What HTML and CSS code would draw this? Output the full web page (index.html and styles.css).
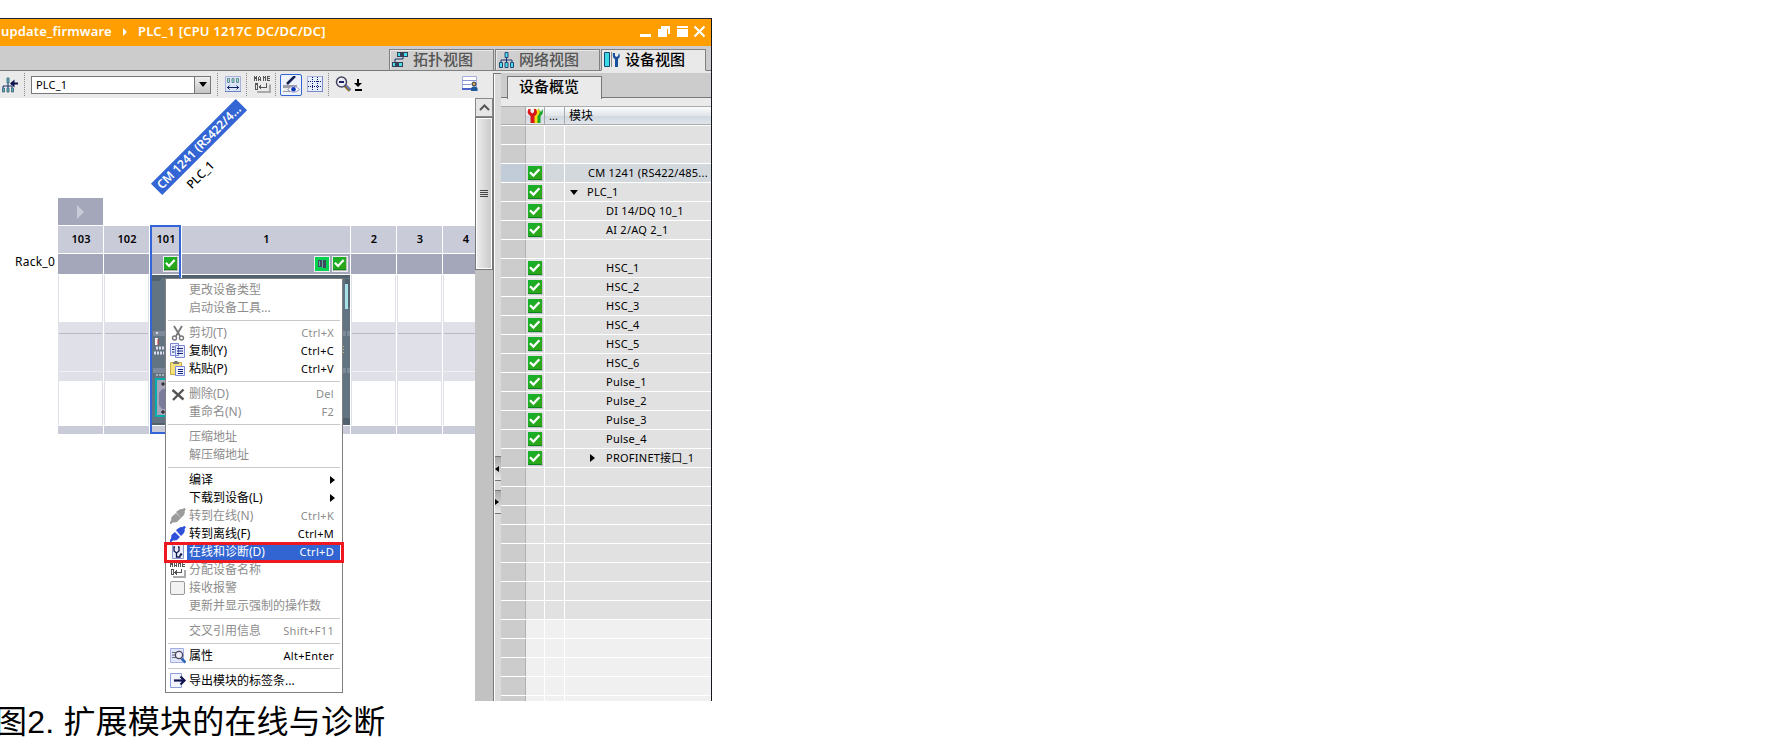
FILE: index.html
```
<!DOCTYPE html>
<html lang="zh-CN">
<head>
<meta charset="utf-8">
<title>PLC_1</title>
<link rel="stylesheet" href="styles.css">
</head>
<body>
<svg width="0" height="0" class="defs">
  <defs>
    <linearGradient id="gr" x1="0" y1="0" x2="1" y2="1"><stop offset="0" stop-color="#12b22e"/><stop offset="1" stop-color="#35a312"/></linearGradient>
    <symbol id="check" viewBox="0 0 15 15"><path d="M1 1h14v14H1z" fill="#c4c4cc"/><path d="M0 0h14v14H0z" fill="url(#gr)"/><path d="M0 13h14v1H0z" fill="#0b8420"/><path d="M2 6.2l3.4 3.4L11.4 3.2" fill="none" stroke="#fff" stroke-width="2.3"/></symbol>
    <symbol id="name" viewBox="0 0 16 16"><path d="M3 15h13M15 8v7" stroke="#aaa" stroke-width="2" fill="none"/><g shape-rendering="crispEdges" fill="#555"><path d="M0 0h1v5H0zM1 1h1v2H1zM2 0h1v5H2zM4 1h1v4H4zM5 0h1v1H5zM5 3h1v1H5zM6 1h1v4H6zM8 0h1v5H8zM9 1h1v1H9zM10 0h1v5h-1zM12 0h1v5h-1zM13 0h2v1h-2zM13 2h2v1h-2zM13 4h2v1h-2z"/><path d="M1 7h3v6H1zM2 8v4h1V8z" fill-rule="evenodd"/><path d="M11 7h1v4H7v2l-3-2.500L7 8v2h4z"/></g></symbol>
    <symbol id="net" viewBox="0 0 16 16"><path d="M8 5v3M2.500 11V8h11v3M8 8v3" stroke="#183068" fill="none"/><path d="M6.500.5h3v5h-3zM1 10.500h3v5H1zM6.500 10.500h3v5h-3zM12 10.500h3v5h-3z" fill="#45e0e8" stroke="#284878"/></symbol>
    <symbol id="plug" viewBox="0 0 16 16"><path d="M0 15.500l3-3M12 4l3-3.500" stroke="currentColor" stroke-width="2.500"/><path d="M1.500 9L6 5l5 5-4 4q-3.500 1-5-.5T1.500 9zM6 4l3.500-2.500q3-1 4.500.5t0 5L11 10z" fill="currentColor"/></symbol>
  </defs>
</svg>
<main class="shot">
<section class="window">
  <header class="title"><span class="crumb1">update_firmware</span><i class="tri"></i><span class="crumb2">PLC_1 [CPU 1217C DC/DC/DC]</span>
    <svg class="winbtns" width="66" height="13" shape-rendering="crispEdges"><g fill="#fff"><path d="M0 9h11v3H0zM21 1h9v8h-2V4h-7zM18 4h9v8h-9zM37 1h11v2H37zM37 4h11v8H37z"/><path d="M54.500 1.500l10 10m0-10l-10 10" stroke="#fff" stroke-width="2.200" shape-rendering="auto"/></g></svg>
  </header>
  <nav class="tabs">
    <div class="tab"><svg width="17" height="16" viewBox="0 0 17 16"><path d="M3 10V7h8V4" fill="none" stroke="#183068"/><path d="M5 0h11v5H5zM0 10h11v5H0z" fill="#344058"/><path d="M6 1h2v3H6zM12 1h3v3h-3zM1 11h2v3H1zM7 11h3v3H7z" fill="#45e0e8"/></svg><span>拓扑视图</span></div>
    <div class="tab"><svg width="17" height="16"><use href="#net"/></svg><span>网络视图</span></div>
    <div class="tab active"><svg width="16" height="16" viewBox="0 0 16 16"><path d="M.5.5h5v14h-5z" fill="#3bd9e4" stroke="#174a70"/><path d="M7 0h1v15H7z" fill="#888"/><path d="M9 1q-1 5 2 6v8h3V7q3-2 1-6l-1 3-1.500 1L11 4V1z" fill="#174f9c"/></svg><span>设备视图</span></div>
  </nav>
  <div class="panes">
    <section class="left">
      <div class="toolbar">
        <svg class="t0" width="17" height="16" viewBox="0 0 17 16"><path d="M6 6v3M1 12V9h9v3M6 9v3" stroke="#183068" fill="none"/><path d="M5 1h2v5H5zM.5 11h2v4h-2zM5 11h2v4H5zM9.500 11h2v4h-2z" fill="#45c0c8" stroke="#507080"/><path d="M16 6.500H9" stroke="#101450" stroke-width="2"/><path d="M12.500 2.500v8l-4.500-4z" fill="#101450"/></svg>
        <i class="dots d0"></i>
        <div class="combo"><span>PLC_1</span><b><i></i></b></div>
        <i class="dots d1"></i>
        <svg width="17" height="17" viewBox="0 0 17 17"><path d="M.5.5h15v15H.5z" fill="#dce6fb" stroke="#a8b2da"/><path d="M0 15.500h16" stroke="#6d7ec4"/><path d="M2.500 2.500h2v4h-2zM7 2.500h2v4H7zM11.500 2.500h2v4h-2z" fill="#7ee" stroke="#788"/><path d="M2 11.500h12M4.500 9.500l-2 2 2 2M11.500 9.500l2 2-2 2" fill="none" stroke="#112060"/></svg>
        <i class="dots d2"></i>
        <svg width="17" height="17"><use href="#name"/></svg>
        <i class="dots d3"></i>
        <span class="pressed"><svg width="18" height="18" viewBox="0 0 18 18"><path d="M1 9h14v4l-3 3H1z" fill="#9a9ca8"/><path d="M13 0L5 8" stroke="#142050" stroke-width="2.500"/><path d="M1 12h5v3H1z" fill="#eee"/><path d="M5.500 13.500q6-6.500 12 0-6 5.500-12 0z" fill="#fff" stroke="#99b"/><circle cx="11.500" cy="13.200" r="2.300" fill="#0737b8"/></svg></span>
        <svg class="grid" width="17" height="17" viewBox="0 0 17 17"><path d="M.5.5h15v15H.5z" fill="#e6edfc" stroke="#a8b4dd"/><path d="M0 15.500h16M15.500 0v16" stroke="#7888c8"/><path d="M1 5.500h14M1 10.500h14M5.500 1v14M10.500 1v14" stroke="#101c70" stroke-dasharray="1 1"/></svg>
        <i class="dots d4"></i>
        <svg class="mag" width="17" height="17" viewBox="0 0 17 17"><path d="M10 9.500l5 5" stroke="#8f6a20" stroke-width="3.500"/><path d="M10.500 9l5 5" stroke="#5878d8" stroke-width="1.500"/><circle cx="6.500" cy="6" r="5" fill="#ededf6" stroke="#444460" stroke-width="1.500"/><path d="M4 6h5" stroke="#182060" stroke-width="2"/></svg>
        <svg class="down" width="9" height="12"><path d="M3 0h2v4h3l-4 4-4-4h3zM1 10h7v2H1z"/></svg>
        <svg class="usr" width="17" height="17" viewBox="0 0 17 17"><path d="M.5.5h14v13H.5z" fill="#fff" stroke="#a4aee0"/><path d="M0 4.500h14M0 8.500h9" stroke="#8a96d4"/><path d="M0 13h10" stroke="#4a62c8" stroke-width="2"/><circle cx="12" cy="8" r="2" fill="#d8a460" stroke="#234"/><path d="M9 15v-3l2-1.500h2.500l2 1.500v3z" fill="#1c5a9c"/></svg>
      </div>
      <div class="work">
        <div class="canvas">
          <div class="rackarrow"><i></i></div>
          <div class="rack">
            <div class="rname">Rack_0</div>
            <div class="slot"><b>103</b><i></i><u></u><s></s></div>
            <div class="slot"><b>102</b><i></i><u></u><s></s></div>
            <div class="slot s101"><b>101</b><i><svg class="cb" width="15" height="15"><use href="#check"/></svg></i>
              <svg class="mod" width="30" height="150" viewBox="0 0 30 150"><path d="M0 0h30v150H0z" fill="#627482"/><path d="M0 0h30v3H12l-2 3H0zM0 148h30v2H0z" fill="#52616e"/><path d="M0 56h2v5H0zM3 56h27v5H3zM0 93h2v5H0zM3 93h27v5H3z" fill="#7c8a9b"/><path d="M6 57h2v2H6z" fill="#ddd"/><path d="M5 63h3v7H5z" fill="#f4f4f4"/><path d="M8 64v6" stroke="#c33"/><path d="M6 73h9M4 78h10" stroke="#dde" stroke-width="3" stroke-dasharray="2 1"/><path d="M6 100h9" stroke="#eee" stroke-dasharray="2 1"/><path d="M6 104h24v37H6z" fill="#aaa6ba" stroke="#00aeae" stroke-width="2"/><path d="M12 114h8v20h-8l-3-4v-12z" fill="#7b7c9b"/><path d="M11 109h4M11 137h4M13 107v4M13 135v4" stroke="#111"/></svg><s></s></div>
            <div class="slot s1"><b>1</b><i><svg class="st" width="16" height="16" shape-rendering="crispEdges"><path d="M0 0h16v16H0z" fill="#eee"/><path d="M1 1h14v14H1z" fill="#00d250"/><path d="M4 4h4v7H4zM8 4h4v8H8z" fill="#3c4c5e"/><path d="M5 5h1v5H5zM8 4h1v8H8z" fill="#6aa8a8"/></svg><svg class="cb" width="15" height="15"><use href="#check"/></svg></i>
              <svg class="mod" width="168" height="150"><path d="M0 0h168v150H0z" fill="#627482"/><path d="M0 0h168v3H0zM0 143h168v7H0zM163 4h5v28h-5z" fill="#52616e"/><path d="M163 9h3v25h-3z" fill="#a8e0ea"/><path d="M161 56h3v5h-3zM165 56h3v5h-3zM161 93h3v5h-3zM165 93h3v5h-3z" fill="#7c8a9b"/><path d="M161.500 71v9" stroke="#c9b68a" stroke-dasharray="1 2"/></svg><s></s></div>
            <div class="slot"><b>2</b><i></i><u></u><s></s></div>
            <div class="slot"><b>3</b><i></i><u></u><s></s></div>
            <div class="slot"><b>4</b><i></i><u></u><s></s></div>
          </div>
          <div class="diag sel">CM 1241 (RS422/4...</div>
          <div class="diag plain">PLC_1</div>
          <div class="selection"></div>
        </div>
        <div class="scroll"><div class="up"><svg width="11" height="7"><path d="M1 6l4.500-4.500L10 6" fill="none" stroke="#555" stroke-width="2"/></svg></div><div class="thumb"><i></i></div></div>
      </div>
    </section>
    <div class="splitter"><i class="c1"><svg width="4" height="6"><path d="M4 0v6L0 3z"/></svg></i><i class="c2"><svg width="4" height="6"><path d="M0 0v6l4-3z"/></svg></i></div>
    <section class="right">
      <div class="subtabs"><span>设备概览</span></div>
      <div class="thead"><span></span><span><svg width="17" height="15" viewBox="0 0 17 15"><path d="M11 0l1 4-2 2v9h3.500V8Q17 6 15.500 1L14 4z" fill="#19a52b"/><path d="M7 0l2 4-2 3v8h3.500V8Q14 5 12 1l-2 1z" fill="#f2dc10"/><path d="M1.500 1Q-1 6 3.500 8v7h4V8Q11.500 6 9 1H7v3L5.500 5.500 3.500 4V1z" fill="#d8171b"/></svg></span><span>...</span><span>模块</span></div>
      <div class="rows" id="rows"></div>
    </section>
  </div>

  <div class="menu">
    <div class="mi off"><span>更改设备类型</span></div>
    <div class="mi off"><span>启动设备工具...</span></div>
    <hr>
    <div class="mi off"><svg width="16" height="16" viewBox="0 0 16 16"><path d="M4 1l6 10M12 1L6 11" stroke="#777" stroke-width="1.800"/><circle cx="4.500" cy="13" r="2" fill="none" stroke="#777" stroke-width="1.400"/><circle cx="11.500" cy="13" r="2" fill="none" stroke="#777" stroke-width="1.400"/></svg><span>剪切(T)</span><kbd>Ctrl+X</kbd></div>
    <div class="mi"><svg width="16" height="16" viewBox="0 0 16 16"><path d="M.5.5h8v12h-8zM5.500 2.500h9v12h-9z" fill="#e9eeff" stroke="#7d88d4"/><path d="M2 4h2.500M2 6.500h2.500M2 9h2.500M7 5.500h6M7 8h6M7 10.500h6" stroke="#142480" stroke-width="1.200"/></svg><span>复制(Y)</span><kbd>Ctrl+C</kbd></div>
    <div class="mi"><svg width="16" height="16" viewBox="0 0 16 16"><path d="M.5 1.500h11v12H.5z" fill="#f5e27a" stroke="#c9aa4b"/><path d="M3 3V1.500L5 0h2l2 1.500V3z" fill="#777"/><path d="M5.500 5.500h9v9h-9z" fill="#eef2ff" stroke="#7d88d4"/><path d="M8 8.500h5M8 10.500h5M8 12.500h5" stroke="#142480"/></svg><span>粘贴(P)</span><kbd>Ctrl+V</kbd></div>
    <hr>
    <div class="mi off"><svg width="16" height="16" viewBox="0 0 16 16"><path d="M2.500 4l11 9.500M13.500 3.500L3 14" stroke="#555" stroke-width="2.400"/></svg><span>删除(D)</span><kbd>Del</kbd></div>
    <div class="mi off"><span>重命名(N)</span><kbd>F2</kbd></div>
    <hr>
    <div class="mi off"><span>压缩地址</span></div>
    <div class="mi off"><span>解压缩地址</span></div>
    <hr>
    <div class="mi"><span>编译</span><em></em></div>
    <div class="mi"><span>下载到设备(L)</span><em></em></div>
    <div class="mi off"><svg class="gplug" width="16" height="16"><use href="#plug"/></svg><span>转到在线(N)</span><kbd>Ctrl+K</kbd></div>
    <div class="mi"><svg class="bplug" width="16" height="16"><use href="#plug"/><path d="M5 5l6 6" stroke="#fff" stroke-width="1.500"/></svg><span>转到离线(F)</span><kbd>Ctrl+M</kbd></div>
    <div class="mi hot"><svg width="16" height="16" viewBox="0 0 16 16"><path d="M2.500.5h11v14h-11z" fill="#e8eefc" stroke="#8a98d0"/><path d="M5 3H4v4l2.500 2L9 7V3H8M6.500 9v4H10v-2" fill="none" stroke="#111850" stroke-width="1.300"/><circle cx="11" cy="10.500" r="1.300" fill="#111850"/></svg><span>在线和诊断(D)</span><kbd>Ctrl+D</kbd></div>
    <div class="mi off"><svg width="16" height="16"><use href="#name"/></svg><span>分配设备名称</span></div>
    <div class="mi off"><svg width="16" height="16"><rect x=".5" y="1.500" width="14" height="13" rx="1.500" fill="#f2f2f2" stroke="#999"/></svg><span>接收报警</span></div>
    <div class="mi off"><span>更新并显示强制的操作数</span></div>
    <hr>
    <div class="mi off"><span>交叉引用信息</span><kbd>Shift+F11</kbd></div>
    <hr>
    <div class="mi"><svg width="16" height="16" viewBox="0 0 16 16"><path d="M.5.5h13v14H.5z" fill="#dfe6fd" stroke="#a4aee2"/><path d="M2 4.500h4M2 7h3M2 9.500h4" stroke="#667"/><path d="M11.500 10.500l4 4" stroke="#2d62b5" stroke-width="2.500"/><circle cx="9" cy="7" r="3.600" fill="#eef" stroke="#445" stroke-width="1.300"/></svg><span>属性</span><kbd>Alt+Enter</kbd></div>
    <hr>
    <div class="mi"><svg width="17" height="16" viewBox="0 0 17 16"><path d="M.5.5h11v14H.5z" fill="#f2f5ff" stroke="#8d9cdc"/><path d="M4 7.500h9" stroke="#101450" stroke-width="2.200"/><path d="M10.500 3.500l4 4-4 4" fill="none" stroke="#101450" stroke-width="2.200"/></svg><span>导出模块的标签条...</span></div>
  </div>
  <div class="redbox"></div>
</section>
<p class="caption">图2. 扩展模块的在线与诊断</p>
</main>
<script src="rows.js"></script>
</body>
</html>
```

FILE: rows.js
```
const names = ['', '', 'CM 1241 (RS422/485...', 'PLC_1', 'DI 14/DQ 10_1', 'AI 2/AQ 2_1', '',
  'HSC_1', 'HSC_2', 'HSC_3', 'HSC_4', 'HSC_5', 'HSC_6',
  'Pulse_1', 'Pulse_2', 'Pulse_3', 'Pulse_4', 'PROFINET接口_1'];
let html = '';
for (let i = 0; i < 31; i++) {
  const n = names[i] || '';
  const cls = 'row' + (i === 2 ? ' picked' : '') + (i > 25 ? ' light' : '');
  const lvl = i === 2 || i === 3 ? 'l1' : 'l2';
  const mark = i === 3 ? '<i class="open"></i>' : i === 17 ? '<i class="closed"></i>' : '';
  const icon = n ? '<svg width="15" height="15"><use href="#check"/></svg>' : '';
  html += `<div class="${cls}"><span></span><span>${icon}</span><span></span><span class="${lvl}">${mark}${n}</span></div>`;
}
document.getElementById('rows').innerHTML = html;
```

FILE: styles.css
```
* { box-sizing: border-box; }
body { margin: 0; background: #fff; font-family: "Noto Sans", "Noto Sans CJK SC", sans-serif; font-size: 11px; color: #000; }
svg { display: block; flex: none; }
.defs { position: absolute; }
.shot { height: 744px; overflow: hidden; padding-top: 18px; }
.window { position: relative; width: 712px; height: 683px; border-top: 1px solid #20243a; border-right: 1px solid #15171f; background: #ccc; display: flex; flex-direction: column; }
.title { height: 27px; flex: none; background: #ff9e00; color: #fff; display: flex; align-items: center; font: 600 13px/25px "Noto Sans"; padding: 0 5px 2px 1px; }
.crumb1 { width: 122px; letter-spacing: .15px; white-space: nowrap; }
.tri { border: 4px solid transparent; border-left-color: #fff; border-right: 0; margin-right: 11px; }
.crumb2 { letter-spacing: .2px; white-space: nowrap; }
.winbtns { margin-left: auto; }
.tabs { height: 27px; flex: none; display: flex; padding: 3px 0 2px 389px; gap: 1px; background: linear-gradient(#ccc 24px, #777 24px, #777 25px, #e8e8e8 25px); }
.tab { width: 105px; height: 22px; border: 1px solid #808080; background: #cfcfcf; display: flex; align-items: center; padding-left: 2px; font: 500 15px/18px "Noto Sans CJK SC"; color: #555; box-shadow: inset 1px 1px #e8e8e8; }
.tab span { margin-left: 4px; padding-bottom: 2px; }
.tab.active { background: #e9e9e9; color: #000; border-bottom-color: #e9e9e9; }
.tab.active span { margin-left: 5px; }
.panes { flex: 1; display: flex; min-height: 0; }
.left { width: 493px; display: flex; flex-direction: column; }
.toolbar { height: 25px; flex: none; background: #eaeaea; display: flex; align-items: center; padding: 0 0 2px 2px; }
.dots { height: 23px; width: 1px; border-left: 1px dotted #888; flex: none; }
.d0 { margin: 0 6px 0 5px; }
.combo { width: 180px; height: 18px; border: 1px solid #777; background: #fff; display: flex; line-height: 16px; justify-content: space-between; padding-left: 4px; letter-spacing: .2px; }
.combo b { width: 16px; border-left: 1px solid #777; background: linear-gradient(#eee,#c4c4c4); display: flex; align-items: center; justify-content: center; }
.combo b i { border: 4px solid transparent; border-top: 5px solid #000; border-bottom: 0; }
.d1 { margin: 0 7px 0 6px; } .d2 { margin: 0 7px 0 4px; } .d3 { margin: 0 4px 0 4px; }
.pressed { width: 22px; height: 22px; border: 1px solid #3265d6; border-radius: 2px; background: #eef2fb; padding: 1px; }
.grid { margin-left: 5px; } .d4 { margin: 0 6px 0 4px; } .down { margin-left: 2px; } .usr { margin-left: 99px; }
.work { flex: 1; display: flex; min-height: 0; }
.canvas { position: relative; width: 475px; background: #fff; overflow: hidden; padding-top: 100px; }
.rackarrow { margin-left: 58px; width: 45px; height: 27px; background: #a4a6b9; display: flex; align-items: center; justify-content: center; }
.rackarrow i { border: 7px solid transparent; border-left-color: #cacbd9; border-right: 0; }
.rack { display: flex; gap: 1px; margin-top: 1px; width: 500px; }
.rname { width: 57px; padding: 28px 2px 0 0; text-align: right; line-height: 16px; font-size: 12px; letter-spacing: .25px; white-space: nowrap; }
.slot { width: 45px; flex: none; }
.s101 { width: 31px; } .s1 { width: 168px; }
.slot b { display: block; height: 27px; background: #cacbd9; text-align: center; font: 600 11px/25px "Noto Sans"; padding-left: 1px; margin-bottom: 1px; }
.slot > i { display: flex; height: 20px; background: #a4a6b9; margin-bottom: 1px; justify-content: flex-end; padding: 2px 2px 0 0; gap: 2px; }
.cb { border: 1px solid #eee; width: 16px; height: 16px; }
.slot u { display: block; height: 150px; border: solid #e0e0e9; border-width: 0 1px; background: linear-gradient(#fff 47px, #e0e0e9 47px, #e0e0e9 58px, #b9bac6 58px, #b9bac6 59px, #e0e0e9 59px, #e0e0e9 96px, #f0f0f6 96px, #f0f0f6 97px, #e0e0e9 97px, #e0e0e9 106px, #fff 106px); }
.slot s { display: block; height: 8px; background: #cacbd9; margin-top: 1px; }
.diag { position: absolute; transform: rotate(-45deg); white-space: nowrap; }
.sel { left: 139px; top: 41px; width: 120px; height: 16px; background: #3366d4; color: #fff; font: 600 12px/16px "Noto Sans"; text-align: center; }
.plain { left: 184px; top: 69px; font-size: 12px; line-height: 16px; font-weight: 500; }
.selection { position: absolute; left: 150px; top: 127px; width: 31px; height: 209px; border: 2px solid #3265d6; }
.scroll { width: 18px; background: #c2c2c2; }
.up { height: 19px; border: 1px solid #888; background: #e6e6e6; display: flex; align-items: center; justify-content: center; }
.thumb { height: 153px; border: 1px solid #777; box-shadow: inset 0 0 0 1px #fff; background: linear-gradient(90deg,#eee,#c8c8c8); display: flex; align-items: center; justify-content: center; }
.thumb i { width: 8px; height: 8px; background: repeating-linear-gradient(#444 0 1px, transparent 1px 2px); }
.splitter { width: 8px; border-left: 1px solid #777; border-top: 1px solid #777; background: #dadada; box-shadow: inset 1px 0 #fff; display: flex; flex-direction: column; padding-top: 382px; gap: 9px; }
.splitter i { height: 25px; margin-left: 1px; border: solid #777; border-width: 1px 0; background: linear-gradient(#aaa,#e8e8e8); display: flex; align-items: center; }
.splitter .c2 { height: 24px; }
.right { flex: 1; display: flex; flex-direction: column; background: #eaeaea; min-height: 0; overflow: hidden; }
.subtabs { height: 33px; flex: none; padding: 3px 0 0 6px; background: linear-gradient(#ccc 24px,#777 24px,#777 25px,#eaeaea 25px); }
.subtabs span { display: block; width: 95px; height: 23px; border: 1px solid #777; border-bottom: 0; background: #eaeaea; font: 500 15px/18px "Noto Sans CJK SC"; padding-left: 11px; }
.thead, .row { display: grid; grid-template-columns: 25px 19px 20px 1fr; }
.thead { height: 19px; flex: none; background: linear-gradient(#fafbfc,#e2e6ea 50%,#d0d8e0 55%,#e0e5ea); border: solid #aaa; border-width: 1px 0; line-height: 17px; }
.thead span { border-right: 1px solid #aaa; padding-left: 4px; white-space: nowrap; }
.thead span:first-child { background: #d0d0d0; }
.thead span:nth-child(2) { padding: 1px 0 0 1px; }
.thead span:last-child { border: 0; font-size: 12px; }
.row { height: 19px; border-top: 1px solid #fff; background: #e1e1e1; line-height: 18px; letter-spacing: .25px; }
.row span { border-right: 1px solid #fff; white-space: nowrap; display: flex; align-items: center; }
.row span:nth-child(2) { padding-left: 2px; }
.row span:first-child { background: #ccc; border-right-color: #b0b0b0; }
.row span:last-child { border: 0; }
.row.light { background: #f0f0f0; }
.row.picked { background: #d2d8dc; }
.row.picked span:first-child { background: #c1ccd8; }
.row .l1 { padding-left: 23px; } .row .l2 { padding-left: 41px; }
.open { border: 4.5px solid transparent; border-top: 5px solid #000; border-bottom: 0; margin: 0 9px 0 -18px; }
.closed { border: 4px solid transparent; border-left: 5px solid #000; border-right: 0; margin: 0 11px 0 -16px; }
.menu { position: absolute; left: 165px; top: 259px; width: 178px; height: 415px; background: #fff; border: 1px solid #808080; padding: 2px; }
.mi { height: 18px; line-height: 17px; position: relative; display: flex; padding: 0 6px 0 21px; font-size: 12px; justify-content: space-between; white-space: nowrap; }
.mi svg { position: absolute; left: 2px; top: 1px; }
.mi kbd { font: 11px/17px "Noto Sans"; letter-spacing: .3px; }
.off { color: #8d8d8d; }
.mi em { border: 4px solid transparent; border-left: 5px solid #000; border-right: 0; align-self: center; margin-right: -1px; }
.gplug { color: #9b9b9b; } .bplug { color: #2f50d8; }
.hot { color: #fff; background: linear-gradient(90deg, #fff 19px, #3265d2 19px); }
.menu hr { height: 1px; border: 0; background: #c8c8c8; margin: 3px 0; }
.redbox { position: absolute; left: 164px; top: 523px; width: 180px; height: 21px; border: 3px solid #f01820; }
.caption { margin: 0 0 0 -5px; font: 32px/42px "Liberation Sans", "Noto Sans CJK SC", sans-serif; letter-spacing: .2px; white-space: nowrap; }
```
